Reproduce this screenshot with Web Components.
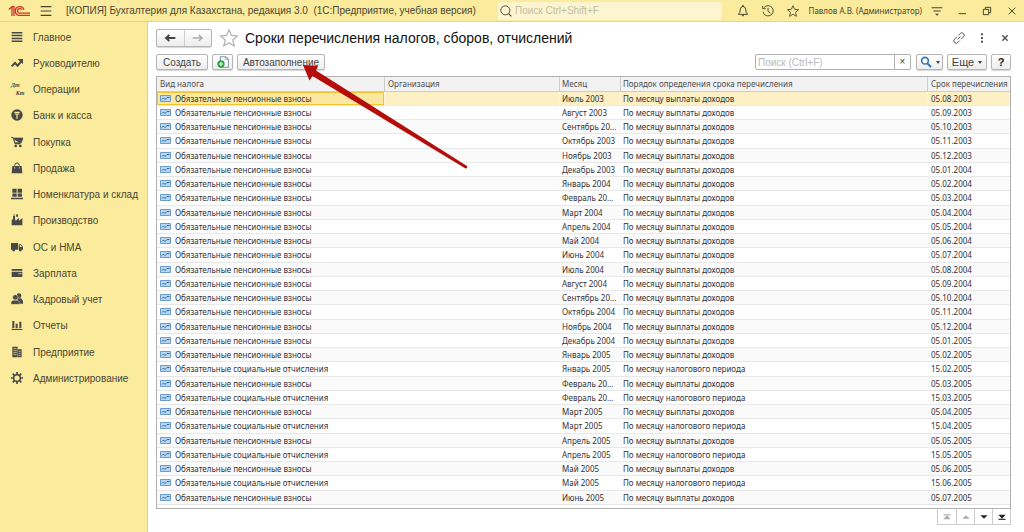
<!DOCTYPE html>
<html lang="ru"><head><meta charset="utf-8"><title>Сроки перечисления</title>
<style>html,body{margin:0;height:100%;background:#fff;font-family:"Liberation Sans",Arial,sans-serif;color:#444}</style></head>
<body><app-shell></app-shell>
<script>
const define=(name,html,setup)=>customElements.define(name,class extends HTMLElement{
  connectedCallback(){
    if(this.shadowRoot)return;
    const t=document.createElement('template');
    t.innerHTML=typeof html==='function'?html(this):html;
    this.attachShadow({mode:'open'}).append(t.content.cloneNode(true));
    if(setup)setup(this.shadowRoot,this);
  }
});

/* 18x18 glyphs of the navigation panel and the bars */
const icons={
 menu:'<path d="M1 2.500h16M1 9h16M1 15.500h16" stroke="currentColor" stroke-width="1.800"/>',
 lines:'<path d="M1 2.5h16M1 6.8h16M1 11.1h16M1 15.4h16" stroke="currentColor" stroke-width="2.2"/>',
 trend:'<path d="M1 14l5-5 4 4 5-6" fill="none" stroke="currentColor" stroke-width="3"/><path d="M10 3h8v8z" fill="currentColor"/>',
 bank:'<circle cx="9" cy="9" r="8.500" fill="currentColor"/><path d="M5 5h8M5.500 7.500h7M9 7.500v7" stroke="#faeb9d" stroke-width="1.800"/>',
 cart:'<path d="M0 2h3l3 10h9M4 3h14l-2.500 7H6z" fill="currentColor" stroke="currentColor" stroke-width="1"/><circle cx="7" cy="15" r="2" fill="currentColor"/><circle cx="14" cy="15" r="2" fill="currentColor"/>',
 bag:'<path d="M2 6h14l1 11H1z" fill="currentColor"/><path d="M5.500 9V5a3.500 3.500 0 0 1 7 0v4" fill="none" stroke="currentColor" stroke-width="1.500"/><path d="M5.500 7v3M12.500 7v3" stroke="#faeb9d" stroke-width="1"/>',
 goods:'<path d="M2 1h6.500v6H2zM10 1h6.500v6H10zM2 8.200h6.500v5H2zM10 8.200h6.500v5H10zM0 14.500h18v2.500H0z" fill="currentColor"/>',
 plant:'<path d="M1 17V9l2-1V3h3v4l1 3 5-4v4l5-4v11z" fill="currentColor"/><path d="M3 1.500h3M8 3.500V1h2v3z" stroke="currentColor" fill="currentColor"/>',
 truck:'<path d="M0 3h10.500v10H0zM11.500 5H15l3 4v4h-6.500z" fill="currentColor"/><circle cx="4" cy="13.500" r="2.200" fill="currentColor"/><circle cx="14" cy="13.500" r="2.200" fill="currentColor"/><path d="M13 6.500h2l1.500 2.500H13z" fill="#faeb9d"/>',
 card:'<path d="M1 3h16v2.500H1zM1 7h16v8H1z" fill="currentColor"/><path d="M11 10h5" stroke="#faeb9d" stroke-width="1.200"/>',
 people:'<circle cx="12" cy="4" r="3.500" fill="currentColor"/><path d="M9 8h6l3 4v4h-6z" fill="currentColor"/><circle cx="6.500" cy="6.500" r="4" fill="currentColor" stroke="#faeb9d" stroke-width=".8"/><path d="M0 17v-3q1-3 4-3h5q3 0 4 3v3z" fill="currentColor" stroke="#faeb9d" stroke-width=".6"/>',
 chart:'<path d="M2 3h3v11H2zM7 7h3v7H7zM12.500 4h3v10h-3zM1 15h16v1.500H1z" fill="currentColor"/>',
 office:'<path d="M2 1h8v16H2zM10.500 5H16v12h-5.500z" fill="currentColor"/><path d="M3.500 4h5M3.500 7h5M3.500 10h5M3.500 13h5M11.500 8h3M11.500 11h3M11.500 14h3" stroke="#faeb9d" stroke-width="1"/>',
 gear:'<circle cx="9" cy="9" r="5" fill="none" stroke="currentColor" stroke-width="2.200"/><path d="M9 0v4M9 14v4M0 9h4M14 9h4M2.600 2.600l2.900 2.900M12.500 12.500l2.900 2.900M2.600 15.400l2.900-2.900M12.500 5.500l2.900-2.900" stroke="currentColor" stroke-width="2.600"/>',
 bell:'<path d="M2 14q3-2 3-8 1-4 4-4t4 4q0 6 3 8z" fill="none" stroke="currentColor" stroke-width="1.500"/><path d="M7 15h4l-2 2.500zM8 0h2v2H8z" fill="currentColor"/>',
 history:'<path d="M3 4a7.700 7.700 0 1 1-1.500 6M1 1.500v4h4.500M9 4.500V9.500l3.500 2.500" fill="none" stroke="currentColor" stroke-width="1.400"/>',
 star:'<path d="M9 1l2.400 5.500 6 .5-4.600 4 1.400 6L9 13.800 3.800 17l1.400-6L.6 7l6-.5z" fill="none" stroke="currentColor" stroke-width="1.300"/>',
 drop:'<path d="M1 4h16M3.500 9h11" stroke="currentColor" stroke-width="1.600"/><path d="M6 13h6l-3 3z" fill="currentColor"/>',
 min:'<path d="M4 13h11" stroke="currentColor" stroke-width="1.500"/>',
 restore:'<path d="M3.500 6.500h8v8h-8zM6.500 6V3.500h8v8H12" fill="none" stroke="currentColor" stroke-width="1.500"/>',
 close:'<path d="M4 4l10 10M14 4L4 14" stroke="currentColor" stroke-width="1.500"/>',
 closeBold:'<path d="M5 5l8 8M13 5l-8 8" stroke="currentColor" stroke-width="2.200"/>',
 search:'<circle cx="8" cy="8" r="6.800" fill="none" stroke="currentColor" stroke-width="1.400"/><path d="M12.500 12.500L17 17" stroke="currentColor" stroke-width="1.700"/>',
 lens:'<circle cx="7.500" cy="7" r="5" fill="#fff" stroke="#2f74b5" stroke-width="2.400"/><path d="M11 11l5.500 5.500" stroke="#2f74b5" stroke-width="3"/>',
 back:'<path d="M17 9H4M8 4.500L3 9l5 4.500" fill="none" stroke="currentColor" stroke-width="2.800"/>',
 fwd:'<path d="M1 9h13M10 4.500L15 9l-5 4.500" fill="none" stroke="currentColor" stroke-width="2.200"/>',
 link:'<g transform="rotate(-45 9 9)" fill="none" stroke="currentColor" stroke-width="1.400"><path d="M8 5.500H3a3.500 3.500 0 0 0 0 7h4M10 12.500h5a3.500 3.500 0 0 0 0-7h-4M6 9h6"/></g>',
 dots:'<path d="M7.500 2h3v3h-3zM7.500 7.500h3v3h-3zM7.500 13h3v3h-3z" fill="currentColor"/>',
 copy:'<path d="M5 1h8l4 4v12H5z" fill="#fff" stroke="#8296a8" stroke-width="1.600"/><path d="M12.500 1v4.500H17" fill="none" stroke="#8296a8"/><circle cx="6" cy="12" r="5.500" fill="#2da343"/><path d="M3 12h6M6 9v6" stroke="#fff" stroke-width="1.600"/>',
 first:'<path d="M1 3h16v2.500H1z" fill="currentColor"/><path d="M1 14h16L9 5z" fill="currentColor"/>',
 up:'<path d="M1 13h16L9 5z" fill="currentColor"/>',
 down:'<path d="M1 5h16l-8 8z" fill="currentColor"/>',
 last:'<path d="M1 13h16v2.500H1z" fill="currentColor"/><path d="M1 4h16l-8 9z" fill="currentColor"/>'
};
define('ui-icon',el=>`<style>:host{display:inline-block;flex:none;width:12px;height:12px}svg{display:block;width:100%;height:100%;overflow:visible}text{font:italic bold 9px "Liberation Serif",serif;fill:currentColor}</style>
<svg viewBox="0 0 18 18" aria-hidden="true">${el.getAttribute('name')==='dtkt'?'<text x="0" y="6">Дт</text><text x="7" y="18">Кт</text>':icons[el.getAttribute('name')]}</svg>`);

define('ui-button',el=>`<style>
:host{display:inline-flex;height:16px}
button{display:flex;align-items:center;justify-content:center;gap:4px;width:100%;height:100%;box-sizing:border-box;margin:0;padding:0 6px;border:1px solid #b5b5b5;border-radius:2px;background:linear-gradient(#fff,#ededed);box-shadow:0 1px 1px #d5d5d5;font:inherit;color:inherit;white-space:nowrap}
</style><button type="button" aria-label="${el.getAttribute('label')||el.textContent.trim()}"><slot></slot></button>`);

define('top-bar',`<style>
:host{display:flex;align-items:center;height:22px;box-sizing:border-box;background:#faeb9d;border-bottom:1px solid #e2d489;font-size:10px;color:#4a4632}
.logo{width:22px;height:12px;margin-left:8px}
.menu{margin-left:10px}
h1{margin:0 0 0 14px;font:inherit;width:403px;white-space:pre;flex:none}
label{display:flex;align-items:center;gap:3px;margin-left:29px;flex:1;max-width:224px;height:18px;box-sizing:border-box;padding-left:2px;background:#fdf5cf;border-radius:2px;min-width:0}
input{flex:1;min-width:0;border:0;padding:0;background:none;outline:0;font:inherit}
input::placeholder{color:#c2bda4;opacity:1}
.tools{display:flex;align-items:center;margin-left:auto}
.tools ui-icon{margin:0 6px 0 7px}
.user{font:8px "Noto Sans",sans-serif;margin:0 2px 0 4px;white-space:nowrap}
</style>
<svg class="logo" viewBox="0 0 22 12" role="img" aria-label="1C"><g fill="none" stroke="#cf3327" stroke-width="1.300"><path d="M.8 4.500L4 1.700V11M4 1.700h2V11"/><path d="M16 4.700A4.400 4.400 0 1 0 12 10.400h10M14 5a2.300 2.300 0 1 0-2 3.200h10"/></g></svg>
<ui-icon class="menu" name="menu"></ui-icon>
<h1>[КОПИЯ] Бухгалтерия для Казахстана, редакция 3.0  (1С:Предприятие, учебная версия)</h1>
<label><ui-icon name="search"></ui-icon><input aria-label="Поиск" placeholder="Поиск Ctrl+Shift+F"></label>
<div class="tools"><ui-icon name="bell"></ui-icon><ui-icon name="history"></ui-icon><ui-icon name="star"></ui-icon><span class="user">Павлов А.В. (Администратор)</span><ui-icon name="drop"></ui-icon><ui-icon name="min"></ui-icon><ui-icon name="restore"></ui-icon><ui-icon name="close"></ui-icon></div>`);

define('side-item',el=>`<style>
:host{display:block;height:26px}
a{display:flex;align-items:center;gap:10px;height:100%;padding-left:11px;color:#4a4632;text-decoration:none;font-size:10px;white-space:nowrap}
ui-icon{color:#484848}
</style><a href="#"><ui-icon name="${el.getAttribute('icon')}"></ui-icon><slot></slot></a>`);

define('side-nav',`<style>
:host{display:block;background:#faeb9d;border-right:1px solid #ddd093}
nav{padding-top:2px}
side-item:nth-child(4n){margin-bottom:1px}
</style><nav>
<side-item icon="lines">Главное</side-item><side-item icon="trend">Руководителю</side-item><side-item icon="dtkt">Операции</side-item><side-item icon="bank">Банк и касса</side-item><side-item icon="cart">Покупка</side-item><side-item icon="bag">Продажа</side-item><side-item icon="goods">Номенклатура и склад</side-item><side-item icon="plant">Производство</side-item><side-item icon="truck">ОС и НМА</side-item><side-item icon="card">Зарплата</side-item><side-item icon="people">Кадровый учет</side-item><side-item icon="chart">Отчеты</side-item><side-item icon="office">Предприятие</side-item><side-item icon="gear">Администрирование</side-item></nav>`);

define('page-head',`<style>
:host{display:flex;align-items:center;height:18px}
.history{display:flex;width:56px;height:18px;box-sizing:border-box;border:1px solid #b5b5b5;border-radius:2px;background:linear-gradient(#fff,#ededed);box-shadow:0 1px 1px #d5d5d5}
button{flex:1;display:flex;align-items:center;justify-content:center;border:0;padding:0;background:none;color:#444}
button+button{border-left:1px solid #ccc;color:#aaa}
.fav{width:18px;height:18px;margin-left:8px;color:#b4b4b4}
h2{margin:0 0 0 7px;font-size:14px;font-weight:400;color:#111;white-space:nowrap}
.tools{display:flex;gap:11px;margin-left:auto;color:#555}
</style>
<div class="history"><button aria-label="Назад"><ui-icon name="back"></ui-icon></button><button aria-label="Вперед"><ui-icon name="fwd"></ui-icon></button></div>
<ui-icon class="fav" name="star"></ui-icon><h2>Сроки перечисления налогов, сборов, отчислений</h2>
<div class="tools"><ui-icon name="link"></ui-icon><ui-icon name="dots"></ui-icon><ui-icon name="closeBold"></ui-icon></div>`);

define('command-bar',`<style>
:host{display:flex;align-items:center;gap:4px;height:16px;font-size:10px;color:#444}
.create{width:52px}.copy{width:21px}.auto{width:88px}
.find{display:flex;margin:0 1px 0 auto;width:156px;height:16px;box-sizing:border-box;border:1px solid #b0b0b0;border-radius:2px}
input{flex:1;min-width:0;border:0;padding:0 2px;background:none;outline:0;font:inherit}
input::placeholder{color:#b9b9b9;opacity:1}
.find button{width:16px;border:0;border-left:1px solid #b0b0b0;background:none;padding:0;font:inherit;line-height:12px;color:#444}
.lens{width:27px}.more{width:40px;font-size:11px}.help{width:20px;font-size:11px;font-weight:700;color:#222}
i{border:3px solid transparent;border-top-color:#444;border-bottom:0;border-left-width:2px;border-right-width:2px}
</style>
<ui-button class="create">Создать</ui-button><ui-button class="copy" label="Скопировать"><ui-icon name="copy"></ui-icon></ui-button><ui-button class="auto">Автозаполнение</ui-button>
<div class="find"><input aria-label="Поиск" placeholder="Поиск (Ctrl+F)"><button aria-label="Очистить">×</button></div>
<ui-button class="lens" label="Найти"><ui-icon name="lens"></ui-icon><i></i></ui-button><ui-button class="more">Еще<i></i></ui-button><ui-button class="help">?</ui-button>`);

const P=['Обязательные пенсионные взносы','По месяцу выплаты доходов'];
const S=['Обязательные социальные отчисления','По месяцу налогового периода'];
const rows=[[P,'Июль 2003','05.08.2003'],[P,'Август 2003','05.09.2003'],[P,'Сентябрь 20…','05.10.2003'],[P,'Октябрь 2003','05.11.2003'],[P,'Ноябрь 2003','05.12.2003'],[P,'Декабрь 2003','05.01.2004'],[P,'Январь 2004','05.02.2004'],[P,'Февраль 20…','05.03.2004'],[P,'Март 2004','05.04.2004'],[P,'Апрель 2004','05.05.2004'],[P,'Май 2004','05.06.2004'],[P,'Июнь 2004','05.07.2004'],[P,'Июль 2004','05.08.2004'],[P,'Август 2004','05.09.2004'],[P,'Сентябрь 20…','05.10.2004'],[P,'Октябрь 2004','05.11.2004'],[P,'Ноябрь 2004','05.12.2004'],[P,'Декабрь 2004','05.01.2005'],[P,'Январь 2005','05.02.2005'],[S,'Январь 2005','15.02.2005'],[P,'Февраль 20…','05.03.2005'],[S,'Февраль 20…','15.03.2005'],[P,'Март 2005','05.04.2005'],[S,'Март 2005','15.04.2005'],[P,'Апрель 2005','05.05.2005'],[S,'Апрель 2005','15.05.2005'],[P,'Май 2005','05.06.2005'],[S,'Май 2005','15.06.2005'],[P,'Июнь 2005','05.07.2005']];

define('tax-table',`<style>
:host{display:block;border:1px solid #b0b0b0;padding-bottom:3px;background:#fff;font:8px "Noto Sans",sans-serif;color:#333338}
table{width:100%;border-collapse:separate;border-spacing:0;table-layout:fixed}
th,td{padding:0 0 0 3px;text-align:left;font-weight:400;line-height:12px;white-space:nowrap;overflow:hidden;box-sizing:border-box}
td:nth-child(3),th:nth-child(3),td:nth-child(4),th:nth-child(4){padding-left:2px}
th{height:15px;background:#f2f2f2;border-bottom:1px solid #ccc;border-right:1px solid #ccc;color:#4c4c50}
th:last-child{border-right:0}
td{height:14px;border-bottom:1px solid #e8e8e8}
tr:nth-child(4n) td{height:15px}
tr:nth-child(odd) td{background:#fafafa}
tbody tr:first-child td{background:#fdf0c4;border-right:1px solid #fff7dd}
tbody tr:first-child td:first-child{background:#fce7a0;box-shadow:inset 0 0 0 1px #f0c530}
svg{width:11px;height:7px;margin-right:4px;vertical-align:0}
</style>
<table><colgroup><col style="width:228px"><col style="width:175px"><col style="width:61px"><col><col style="width:82px"></colgroup>
<thead><tr><th>Вид налога</th><th>Организация</th><th>Месяц</th><th>Порядок определения срока перечисления</th><th>Срок перечисления</th></tr></thead><tbody></tbody></table>`,root=>{
 root.querySelector('tbody').innerHTML=rows.map(([k,m,d])=>`<tr><td><svg viewBox="0 0 11 7" aria-hidden="true"><path d="M.5.5h10v6H.5z" fill="#b9d6f0" stroke="#6b9cc8"/><path d="M2 4.500l1.500-1.500L5 4.500 7 2.500h2.500" fill="none" stroke="#2f6da5"/></svg>${k[0]}</td><td></td><td>${m}</td><td>${k[1]}</td><td>${d}</td></tr>`).join('');
});

define('list-pager',`<style>
:host{display:flex;justify-content:flex-end}
div{display:flex;border:1px solid #ccc;border-top:0}
button{width:18px;height:15px;display:flex;align-items:center;justify-content:center;padding:0;border:0;border-left:1px solid #ccc;background:#fff;color:#222}
button:first-child{border-left:0}
button:disabled{color:#aaa}
ui-icon{width:8px;height:8px}
</style><div><button disabled aria-label="В начало"><ui-icon name="first"></ui-icon></button><button disabled aria-label="Вверх"><ui-icon name="up"></ui-icon></button><button aria-label="Вниз"><ui-icon name="down"></ui-icon></button><button aria-label="В конец"><ui-icon name="last"></ui-icon></button></div>`);

define('pointer-arrow',`<style>:host{position:absolute;left:154px;top:36px;width:170px;height:112px;pointer-events:none}svg{display:block}</style>
<svg width="170" height="112" viewBox="302 58 170 112" aria-hidden="true"><path d="M303 65L318 66 316 70.500 467 166Q468 168 465.500 168.500L312.500 76 309.500 80.500z" fill="#b50d0a"/></svg>`);

define('app-shell',`<style>
:host{display:grid;grid-template-rows:auto 1fr;min-height:100%}
.body{display:grid;grid-template-columns:148px minmax(0,1fr)}
main{position:relative;padding:7px 13px 0 8px}
command-bar{margin:7px 0 6px}
</style><top-bar></top-bar><div class="body"><side-nav></side-nav><main><page-head></page-head><command-bar></command-bar><tax-table></tax-table><list-pager></list-pager><pointer-arrow></pointer-arrow></main></div>`);
</script></body></html>
